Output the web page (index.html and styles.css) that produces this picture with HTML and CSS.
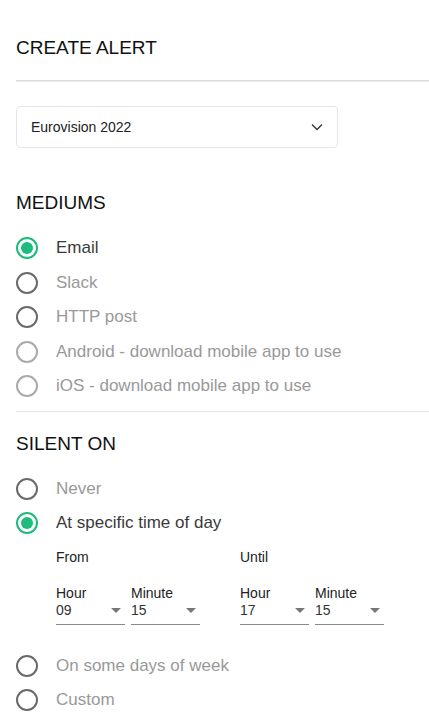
FILE: index.html
```html
<!DOCTYPE html>
<html lang="en">
<head>
  <meta charset="UTF-8" />
  <meta name="viewport" content="width=device-width, initial-scale=1.0" />
  <title>Create Alert</title>
  <link rel="stylesheet" href="styles.css">
</head>
<body>
  <div id="page">
    <h1 class="title">CREATE ALERT</h1>
    <hr class="rule-thick" />

    <div class="event-select">
      <span>Eurovision 2022</span>
      <svg width="12" height="8" viewBox="0 0 12 8"><path d="M1 1.5 L6 6.5 L11 1.5" fill="none" stroke="#333" stroke-width="1.3"/></svg>
    </div>

    <h2 class="section">MEDIUMS</h2>
    <div class="radio-list">
      <label class="radio checked"><span class="dot"></span>Email</label>
      <label class="radio"><span class="dot"></span>Slack</label>
      <label class="radio"><span class="dot"></span>HTTP post</label>
      <label class="radio faded"><span class="dot"></span>Android - download mobile app to use</label>
      <label class="radio faded"><span class="dot"></span>iOS - download mobile app to use</label>
    </div>

    <hr class="rule-thin" />

    <h2 class="section">SILENT ON</h2>
    <div class="radio-list">
      <label class="radio"><span class="dot"></span>Never</label>
      <label class="radio checked"><span class="dot"></span>At specific time of day</label>
    </div>

    <div class="time-range">
      <div class="time-group">
        <p class="time-title">From</p>
        <div class="time-fields">
          <div class="time-field"><span class="field-label">Hour</span><span class="field-value">09<i class="caret"></i></span></div>
          <div class="time-field"><span class="field-label">Minute</span><span class="field-value">15<i class="caret"></i></span></div>
        </div>
      </div>
      <div class="time-group">
        <p class="time-title">Until</p>
        <div class="time-fields">
          <div class="time-field"><span class="field-label">Hour</span><span class="field-value">17<i class="caret"></i></span></div>
          <div class="time-field"><span class="field-label">Minute</span><span class="field-value">15<i class="caret"></i></span></div>
        </div>
      </div>
    </div>

    <div class="radio-list last">
      <label class="radio"><span class="dot"></span>On some days of week</label>
      <label class="radio"><span class="dot"></span>Custom</label>
    </div>
  </div>
</body>
</html>
```

FILE: styles.css
```css
body {
  margin: 0;
  font-family: "Liberation Sans", Arial, sans-serif;
  background: #fff;
  color: #222;
}

#page {
  padding: 0 0 0 16px;
}

.title, .section {
  font-size: 19px;
  font-weight: 400;
  line-height: 24px;
  color: #111;
  margin: 0;
}

.title {
  padding-top: 36px;
}

.rule-thick {
  margin: 20px 0 0;
  border: none;
  border-top: 1px solid #dcdcdc;
  border-bottom: 1px solid #ececec;
  height: 0;
}

.rule-thin {
  margin: 7px 0 0;
  border: none;
  border-top: 1px solid #e6e6e6;
  height: 0;
}

.event-select {
  margin-top: 24px;
  width: 322px;
  height: 42px;
  box-sizing: border-box;
  border: 1px solid #e6e6e6;
  border-radius: 4px;
  display: flex;
  align-items: center;
  justify-content: space-between;
  padding: 0 14px 0 14px;
  font-size: 14px;
  color: #222;
}

.section {
  margin-top: 43px;
}

.rule-thin + .section {
  margin-top: 20px;
}

.radio-list {
  margin-top: 16px;
  display: flex;
  flex-direction: column;
}

.radio-list.last {
  margin-top: 24px;
}

.radio {
  height: 34.5px;
  display: flex;
  align-items: center;
  font-size: 17px;
  color: #999;
}

.dot {
  width: 22px;
  height: 22px;
  box-sizing: border-box;
  border: 2px solid #6a6a6a;
  border-radius: 50%;
  margin-right: 18px;
  flex-shrink: 0;
  display: flex;
  align-items: center;
  justify-content: center;
}

.radio.faded .dot {
  border-color: #aaa;
}

.radio.checked {
  color: #3a3a3a;
}

.radio.checked .dot {
  border-color: #1dbb7c;
}

.radio.checked .dot::after {
  content: "";
  width: 12px;
  height: 12px;
  border-radius: 50%;
  background: #1dbb7c;
}

.time-range {
  display: flex;
  gap: 40px;
  padding-left: 40px;
  margin-top: 8px;
}

.time-title {
  margin: 0;
  font-size: 14px;
  line-height: 16px;
  color: #222;
}

.time-fields {
  display: flex;
  gap: 6px;
  margin-top: 20px;
}

.time-field {
  width: 69px;
  display: flex;
  flex-direction: column;
  font-size: 14px;
  line-height: 17px;
  color: #222;
  border-bottom: 1px solid #888;
  padding-bottom: 5px;
}

.field-value {
  display: flex;
  align-items: center;
  justify-content: space-between;
  color: #333;
}

.caret {
  width: 0;
  height: 0;
  border-left: 5px solid transparent;
  border-right: 5px solid transparent;
  border-top: 5px solid #777;
  margin-right: 4px;
}
```
